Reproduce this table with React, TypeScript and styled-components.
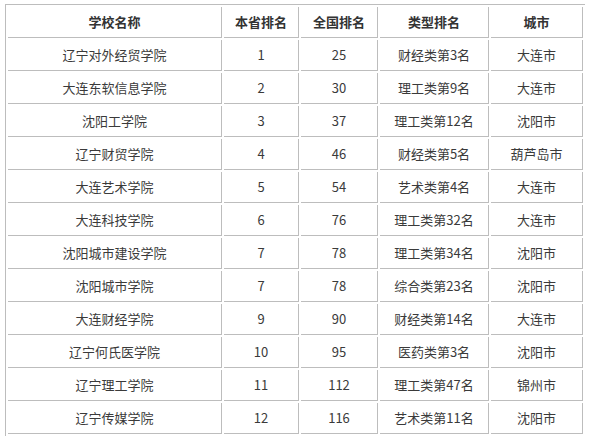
import { FC } from 'react';
import styled, { createGlobalStyle } from 'styled-components';

const GlobalStyle = createGlobalStyle`
	html, body {
		margin: 0;
		padding: 0;
		background: #ffffff;
	}
	body {
		font-family: 'Noto Sans CJK SC', 'Noto Sans', 'Liberation Sans', sans-serif;
	}
`;

const columns = [
	{ title: '学校名称', width: 214 },
	{ title: '本省排名', width: 75 },
	{ title: '全国排名', width: 77 },
	{ title: '类型排名', width: 109 },
	{ title: '城市', width: 92 },
];

const rows: string[][] = [
	['辽宁对外经贸学院', '1', '25', '财经类第3名', '大连市'],
	['大连东软信息学院', '2', '30', '理工类第9名', '大连市'],
	['沈阳工学院', '3', '37', '理工类第12名', '沈阳市'],
	['辽宁财贸学院', '4', '46', '财经类第5名', '葫芦岛市'],
	['大连艺术学院', '5', '54', '艺术类第4名', '大连市'],
	['大连科技学院', '6', '76', '理工类第32名', '大连市'],
	['沈阳城市建设学院', '7', '78', '理工类第34名', '沈阳市'],
	['沈阳城市学院', '7', '78', '综合类第23名', '沈阳市'],
	['大连财经学院', '9', '90', '财经类第14名', '大连市'],
	['辽宁何氏医学院', '10', '95', '医药类第3名', '沈阳市'],
	['辽宁理工学院', '11', '112', '理工类第47名', '锦州市'],
	['辽宁传媒学院', '12', '116', '艺术类第11名', '沈阳市'],
];

const Wrapper = styled.div`
	padding: 4px 0 0 5px;
`;

const Table = styled.table`
	width: 580px;
	table-layout: fixed;
	border-collapse: separate;
	border-spacing: 2px;
	border-top: 1px solid #bdbdbd;
	border-left: 1px solid #bdbdbd;
	box-sizing: border-box;
	color: #333333;
	font-size: 13px;
`;

const Cell = styled.td<{ $head?: boolean }>`
	box-sizing: border-box;
	height: 31px;
	padding: 0;
	line-height: 30px;
	text-align: center;
	white-space: nowrap;
	border-right: 1px solid #bdbdbd;
	border-bottom: 1px solid #bdbdbd;
	font-weight: ${({ $head }) => ($head ? 700 : 400)};
	color: ${({ $head }) => ($head ? '#333333' : '#3a3a3a')};
`;

const App: FC = () => {
	return (
		<>
			<GlobalStyle />
			<Wrapper>
				<Table>
					<colgroup>
						{columns.map((c) => (
							<col key={c.title} style={{ width: c.width }} />
						))}
					</colgroup>
					<thead>
						<tr>
							{columns.map((c) => (
								<Cell as="th" $head key={c.title}>
									{c.title}
								</Cell>
							))}
						</tr>
					</thead>
					<tbody>
						{rows.map((r, idx) => (
							<tr key={idx}>
								{r.map((v, i) => (
									<Cell key={i}>{v}</Cell>
								))}
							</tr>
						))}
					</tbody>
				</Table>
			</Wrapper>
		</>
	);
};

export default App;
